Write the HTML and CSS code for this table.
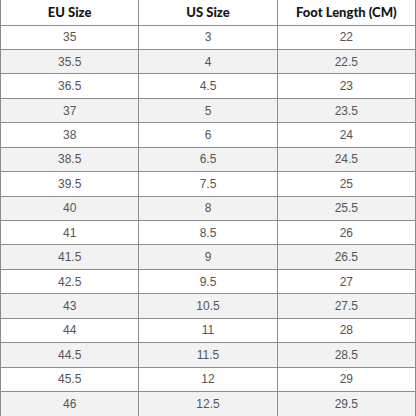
FILE: index.html
```html
<!DOCTYPE html>
<html>
<head>
<meta charset="utf-8">
<link rel="stylesheet" href="styles.css">
</head>
<body>
<table class="size-table">
  <colgroup><col class="c"><col class="c"><col class="c"></colgroup>
  <thead>
    <tr class="head"><th>EU Size</th><th>US Size</th><th>Foot Length (CM)</th></tr>
  </thead>
  <tbody>
    <tr><td>35</td><td>3</td><td>22</td></tr>
    <tr><td>35.5</td><td>4</td><td>22.5</td></tr>
    <tr><td>36.5</td><td>4.5</td><td>23</td></tr>
    <tr><td>37</td><td>5</td><td>23.5</td></tr>
    <tr><td>38</td><td>6</td><td>24</td></tr>
    <tr><td>38.5</td><td>6.5</td><td>24.5</td></tr>
    <tr><td>39.5</td><td>7.5</td><td>25</td></tr>
    <tr><td>40</td><td>8</td><td>25.5</td></tr>
    <tr><td>41</td><td>8.5</td><td>26</td></tr>
    <tr><td>41.5</td><td>9</td><td>26.5</td></tr>
    <tr><td>42.5</td><td>9.5</td><td>27</td></tr>
    <tr><td>43</td><td>10.5</td><td>27.5</td></tr>
    <tr><td>44</td><td>11</td><td>28</td></tr>
    <tr><td>44.5</td><td>11.5</td><td>28.5</td></tr>
    <tr><td>45.5</td><td>12</td><td>29</td></tr>
    <tr><td>46</td><td>12.5</td><td>29.5</td></tr>
  </tbody>
</table>
</body>
</html>
```
FILE: styles.css
```css
html, body {
  margin: 0;
  padding: 0;
  background: #ffffff;
}
.size-table {
  width: 416px;
  table-layout: fixed;
  border-collapse: collapse;
  font-family: "Lato", "Liberation Sans", sans-serif;
}
.size-table th,
.size-table td {
  border: 1px solid #8c8c8c;
  text-align: center;
  padding: 0;
  vertical-align: middle;
  line-height: 1;
}
.size-table thead th {
  border-top: none;
  height: 24.5px;
  font-size: 13px;
  font-weight: 900;
  color: #161616;
}
.size-table tbody td {
  height: 23.45px;
  font-family: "Liberation Sans", "Open Sans", sans-serif;
  font-size: 12px;
  color: #555555;
}
.size-table tbody tr:nth-child(even) td {
  background: #f2f2f2;
}
```
